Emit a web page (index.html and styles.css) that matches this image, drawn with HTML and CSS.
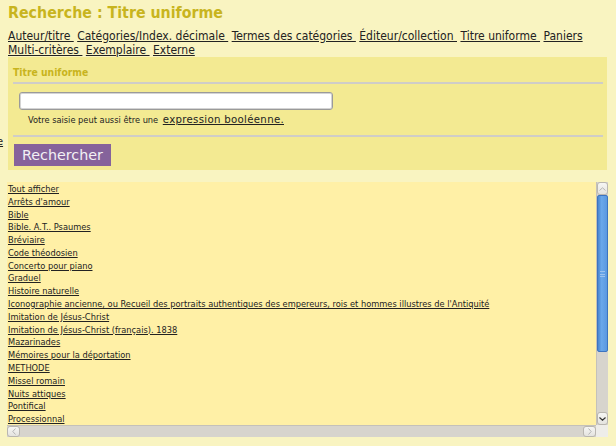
FILE: index.html
```html
<!DOCTYPE html>
<html lang="fr">
<head>
<meta charset="utf-8">
<title>Recherche : Titre uniforme</title>
<link rel="stylesheet" href="styles.css">
</head>
<body>
<a class="stray" href="#">e</a>
<h1 class="title">Recherche : Titre uniforme</h1>
<div class="nav">
  <a href="#">Auteur/titre&nbsp;</a> <a href="#">Catégories/Index. décimale&nbsp;</a> <a href="#">Termes des catégories&nbsp;</a> <a href="#">Éditeur/collection&nbsp;</a> <a href="#">Titre uniforme&nbsp;</a> <a href="#">Paniers</a><br>
  <a href="#">Multi-critères&nbsp;</a> <a href="#">Exemplaire&nbsp;</a> <a href="#">Externe</a>
</div>
<form class="search">
  <div class="label">Titre uniforme</div>
  <div class="rule"></div>
  <div class="field"><input type="text" class="input"></div>
  <div class="hint"><span class="small">Votre saisie peut aussi être une</span> <a href="#" class="bool">expression booléenne.</a></div>
  <div class="rule rule2"></div>
  <button type="button" class="btn">Rechercher</button>
</form>
<div class="listbox">
  <div class="list">
    <a href="#">Tout afficher</a>
    <a href="#">Arrêts d'amour</a>
    <a href="#">Bible</a>
    <a href="#">Bible. A.T.. Psaumes</a>
    <a href="#">Bréviaire</a>
    <a href="#">Code théodosien</a>
    <a href="#">Concerto pour piano</a>
    <a href="#">Graduel</a>
    <a href="#">Histoire naturelle</a>
    <a href="#">Iconographie ancienne, ou Recueil des portraits authentiques des empereurs, rois et hommes illustres de l'Antiquité</a>
    <a href="#">Imitation de Jésus-Christ</a>
    <a href="#">Imitation de Jésus-Christ (français). 1838</a>
    <a href="#">Mazarinades</a>
    <a href="#">Mémoires pour la déportation</a>
    <a href="#">METHODE</a>
    <a href="#">Missel romain</a>
    <a href="#">Nuits attiques</a>
    <a href="#">Pontifical</a>
    <a href="#">Processionnal</a>
  </div>
  <div class="vscroll">
    <div class="sbtn up"><svg width="7" height="4" viewBox="0 0 7 4"><path d="M0.5 3.5 L3.5 0.8 L6.5 3.5" fill="none" stroke="#b5b5b5" stroke-width="1"/></svg></div>
    <div class="thumb"><span class="grip"></span></div>
    <div class="track"></div>
    <div class="sbtn down"><svg width="7" height="4" viewBox="0 0 7 4"><path d="M0.5 0.5 L3.5 3.2 L6.5 0.5" fill="none" stroke="#333" stroke-width="1.2"/></svg></div>
  </div>
  <div class="hscroll">
    <div class="sbtn left"><svg width="4" height="7" viewBox="0 0 4 7"><path d="M3.5 0.5 L0.8 3.5 L3.5 6.5" fill="none" stroke="#b5b5b5" stroke-width="1"/></svg></div>
    <div class="htrack"></div>
    <div class="sbtn right"><svg width="4" height="7" viewBox="0 0 4 7"><path d="M0.5 0.5 L3.2 3.5 L0.5 6.5" fill="none" stroke="#b5b5b5" stroke-width="1"/></svg></div>
  </div>
  <div class="corner"></div>
</div>
</body>
</html>
```
FILE: styles.css
```css
* { box-sizing: border-box; }
html, body { margin: 0; }
body {
  background: #f9f4c1;
  font-family: "DejaVu Sans Condensed", "DejaVu Sans", sans-serif;
  color: #222;
  padding: 0 8px;
  position: relative;
  overflow: hidden;
  height: 446px;
}
a { color: #222; text-decoration: underline; }

.stray {
  position: absolute;
  left: -3px;
  top: 135px;
  font-size: 11px;
  line-height: 14px;
}

.title {
  margin: 4px 0 7px;
  font-size: 15.8px;
  line-height: 18px;
  font-weight: bold;
  color: #c8b41e;
}

.nav {
  font-size: 12px;
  line-height: 14px;
}

.search {
  margin: 0 1px 0 0;
  background: #f3ea92;
  padding: 9px 4px 4px 5px;
}
.label {
  font-weight: bold;
  font-size: 10.3px;
  line-height: 12px;
  color: #c8b41e;
}
.rule {
  height: 2px;
  background: #cfcdc8;
  margin-top: 4px;
}
.rule2 { margin-top: 11px; }
.field { margin-top: 8px; padding-left: 6px; display: flex; }
.input {
  width: 314px;
  height: 18px;
  border: 1px solid #9a9a9a;
  border-radius: 3px;
  background: #fff;
  box-shadow: inset 0 0 0 1px #d4d4d4;
  padding: 0 3px;
  margin: 0;
}
.hint {
  margin-top: 1px;
  padding-left: 15px;
  height: 13px;
  line-height: 13px;
  white-space: nowrap;
}
.small { font-size: 9.2px; line-height: 1; }
.bool {
  font-family: "DejaVu Sans", sans-serif;
  font-size: 10.2px;
  line-height: 1;
  letter-spacing: 0.3px;
}
.btn {
  display: block;
  margin: 7px 0 0 1px;
  width: 97px;
  height: 22px;
  border: none;
  background: #85639b;
  color: #f2f0f4;
  font-family: "DejaVu Sans", sans-serif;
  font-size: 14.3px;
  padding: 0 0 0 8px;
  text-align: left;
  line-height: 22px;
}

.listbox {
  margin: 12px 0 0 -1px;
  height: 255px;
  display: grid;
  grid-template-columns: 1fr 12px;
  grid-template-rows: 1fr 12px;
  background: #fff0a6;
}
.list {
  overflow: hidden;
  padding: 1px 0 0 1px;
  font-size: 9.2px;
  line-height: 12.78px;
  white-space: nowrap;
}
.list a { display: block; width: max-content; }

.vscroll {
  display: flex;
  flex-direction: column;
  background: #d7d4cd;
  border-left: 1px solid #c4c1ba;
}
.sbtn {
  background: linear-gradient(#f6f6f4, #e4e3df);
  border: 1px solid #b9b6b0;
  border-radius: 3px;
  display: flex;
  align-items: center;
  justify-content: center;
  flex: none;
}
.vscroll .sbtn { height: 13px; }
.thumb {
  height: 157px;
  flex: none;
  background: linear-gradient(90deg, #4a86d0, #6aa8ea 40%, #5a98e0);
  border: 1px solid #3c74c0;
  border-radius: 2px;
  display: flex;
  align-items: center;
  justify-content: center;
}
.grip {
  width: 5px;
  height: 6px;
  border-top: 1px solid #9cc2ee;
  border-bottom: 1px solid #9cc2ee;
  position: relative;
}
.grip::after {
  content: "";
  position: absolute;
  left: 0; right: 0; top: 2px;
  height: 1px;
  background: #9cc2ee;
}
.track { flex: 1; }
.hscroll {
  display: flex;
  background: #d7d4cd;
  border-top: 1px solid #c4c1ba;
}
.hscroll .sbtn { width: 13px; }
.htrack { flex: 1; }
.corner { background: #eeede9; }
```
